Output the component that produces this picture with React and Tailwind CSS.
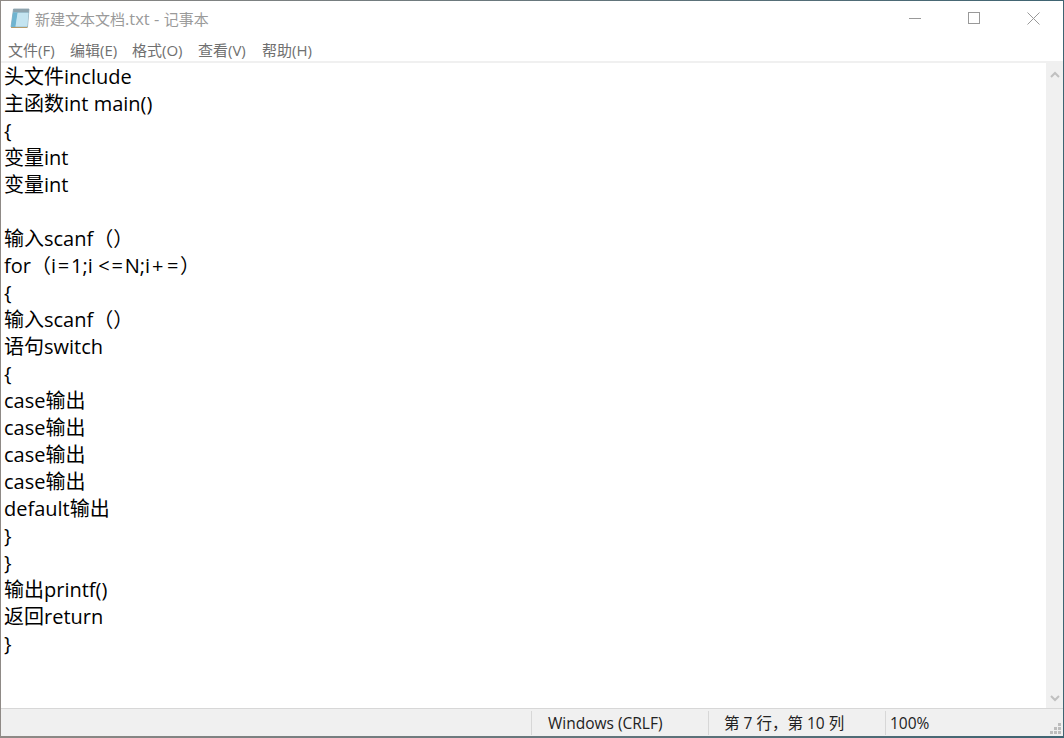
import React from 'react';

const LINES = [
  '头文件include',
  '主函数int main()',
  '{',
  '变量int',
  '变量int',
  '',
  '输入scanf（）',
  null,
  '{',
  '输入scanf（）',
  '语句switch',
  '{',
  'case输出',
  'case输出',
  'case输出',
  'case输出',
  'default输出',
  '}',
  '}',
  '输出printf()',
  '返回return',
  '}',
];

function NotepadIcon() {
  return (
    <svg width="20" height="21" viewBox="0 0 20 21">
      <path d="M3.5 1h15.5l-1.5 18H1z" fill="#a9d6e8" stroke="#7d9aa8" strokeWidth="0.7" />
      <path d="M3.5 1h15.5l-.4 3.5H3.2z" fill="#8ea3ad" />
      <path d="M3 4.5h5L5.5 19H1z" fill="#6fb4d0" />
      <path d="M7.5 5h11l-1.2 13.5H5.5z" fill="#c4e4f0" />
      <path d="M1 19h16.5l-.1 1H1.1z" fill="#b59a6a" />
    </svg>
  );
}

// the for line has half-width looking signs, so they get their own boxes
function ForLine() {
  const eq = 'inline-block w-[15px] text-center';
  return (
    <div className="h-[27px]">
      for（i<span className={eq}>=</span>1;i<span className="inline-block w-[17px] text-right">&lt;</span>
      <span className={eq}>=</span>N;i<span className={eq}>+</span><span className={eq}>=</span>）
    </div>
  );
}

export default function App() {
  return (
    <div className="w-[1064px] h-[738px] pt-px px-px pb-[2px] bg-gradient-to-r from-[#8f8a86] to-[#3f6472]">
      <div className="relative h-full flex flex-col bg-white overflow-hidden font-['Open_Sans','Noto_Sans_CJK_SC',sans-serif]">
        <div className="h-[35px] shrink-0 flex items-center">
          <div className="ml-[9px] mr-[5px] flex items-center">
            <NotepadIcon />
          </div>
          <span className="text-[15px] text-[#9a9a9a] pt-[2px]">新建文本文档<span className="text-[16.5px]">.txt - </span>记事本</span>
          <div className="ml-auto flex h-full">
            {/* min, max, close */}
            <div className="w-[59px] flex items-center justify-center">
              <svg width="13" height="13" viewBox="0 0 13 13"><path d="M0 6.5h12" stroke="#999" fill="none" /></svg>
            </div>
            <div className="w-[59px] flex items-center justify-center">
              <svg width="13" height="13" viewBox="0 0 13 13"><rect x="0.5" y="0.5" width="11" height="11" stroke="#999" fill="none" /></svg>
            </div>
            <div className="w-[59px] flex items-center justify-center">
              <svg width="13" height="13" viewBox="0 0 13 13"><path d="M0.5 0.5l12 12M12.5 0.5l-12 12" stroke="#999" fill="none" /></svg>
            </div>
          </div>
        </div>
        <div className="h-[27px] shrink-0 flex items-center pl-[7px] pt-[3px] border-b-2 border-[#f0f0f0] text-[15px] text-[#707070]">
          <span className="w-[62px]">文件(F)</span>
          <span className="w-[62px]">编辑(E)</span>
          <span className="w-[66px]">格式(O)</span>
          <span className="w-[64px]">查看(V)</span>
          <span>帮助(H)</span>
        </div>
        <div className="flex-1 flex min-h-0">
          <div className="flex-1 pl-[3px] text-[20px] leading-[27px] text-black whitespace-pre">
            {LINES.map((line, i) => (
              line === null ? <ForLine key={i} /> : <div key={i} className="h-[27px]">{line}</div>
            ))}
          </div>
          <div className="w-[17px] bg-[#f0f0f0] flex flex-col justify-between items-center pt-[8px] pb-[6px]">
            <svg width="10" height="7" viewBox="0 0 10 7"><path d="M1 6l4-4 4 4" stroke="#c0c0c0" strokeWidth="2" fill="none" /></svg>
            <svg width="10" height="7" viewBox="0 0 10 7"><path d="M1 1l4 4 4-4" stroke="#c0c0c0" strokeWidth="2" fill="none" /></svg>
          </div>
        </div>
        <div className="h-[28px] shrink-0 flex items-center bg-[#f0f0f0] border-t border-[#d7d7d7] text-[15.5px] text-[#222]">
          <div className="w-[530px]" />
          <div className="w-[177px] h-[24px] flex items-center pl-[16px] pt-[2px] border-l border-[#d7d7d7]">Windows (CRLF)</div>
          <div className="w-[177px] h-[24px] flex items-center pl-[15px] pt-[2px] border-l border-[#d7d7d7]">第 7 行，第 10 列</div>
          <div className="flex-1 h-[24px] flex items-center pl-[4px] pt-[2px] border-l border-[#d7d7d7]">100%</div>
        </div>
        <svg className="absolute right-[1px] bottom-[1px]" width="12" height="12" viewBox="0 0 12 12" fill="#bdbdbd">
          <rect x="8" y="0" width="3" height="3" />
          <rect x="4" y="4" width="3" height="3" />
          <rect x="8" y="4" width="3" height="3" />
          <rect x="0" y="8" width="3" height="3" />
          <rect x="4" y="8" width="3" height="3" />
          <rect x="8" y="8" width="3" height="3" />
        </svg>
      </div>
    </div>
  );
}
